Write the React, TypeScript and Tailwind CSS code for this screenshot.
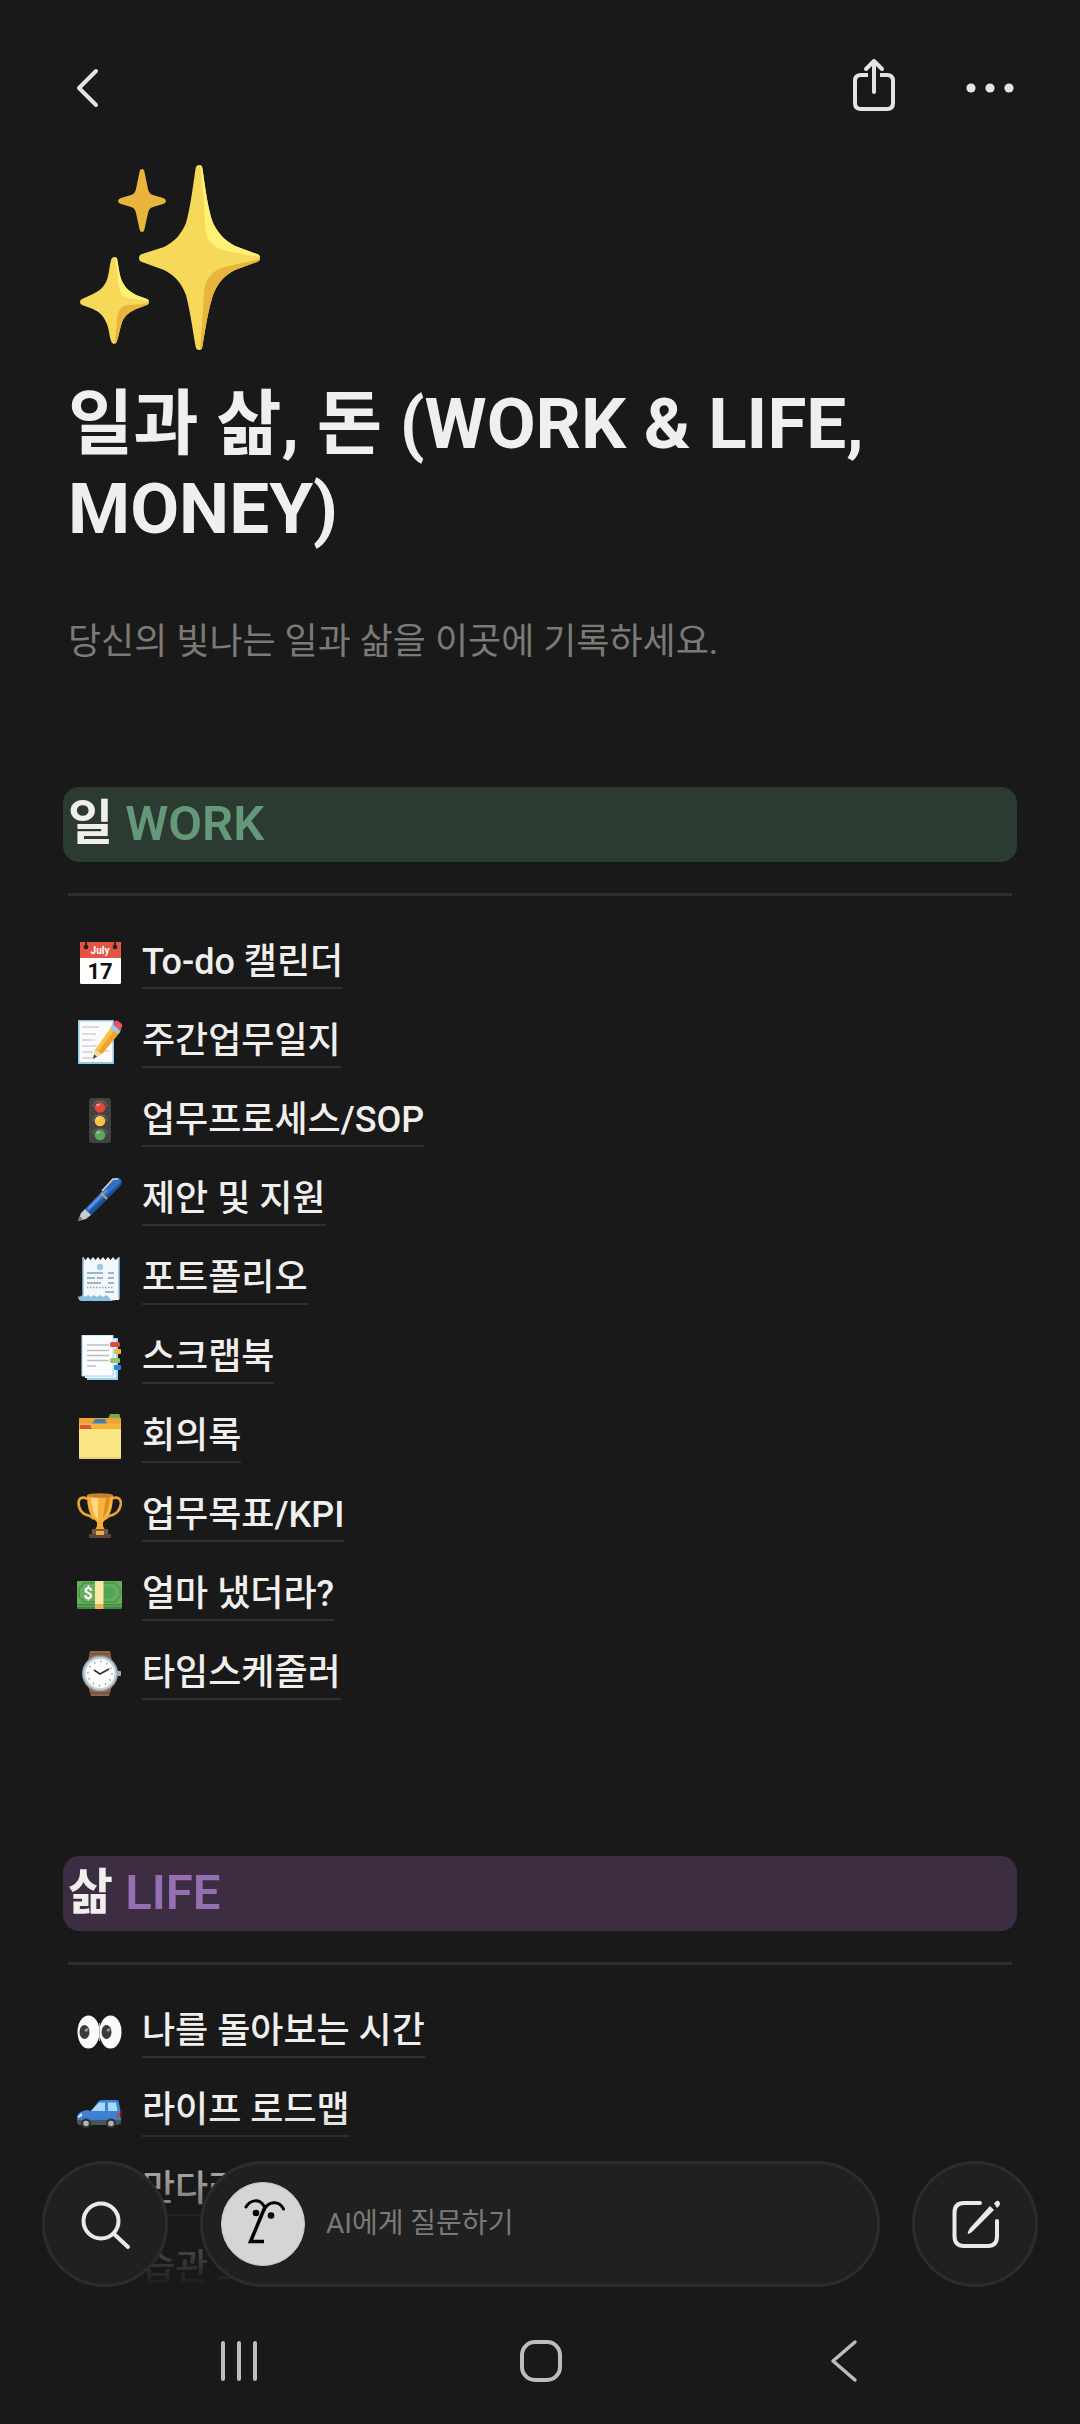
import type { ReactNode } from "react";

const font = "font-['Roboto','Noto_Sans_CJK_KR',sans-serif]";

function Sparkles() {
  return (
    <svg viewBox="0 0 200 200" className="size-50" aria-hidden="true">
      <path
        d="M131 0Q134 0 134.500 4C138 28 140 44 145 58C151 70 158 76 167 81L189 89Q192 90 192 93Q192 96 189 97L167 105C157 110 150 117 145 130C140 146 138 160 134.500 181Q134 185 131 185Q128 185 127.500 181C124 160 122 146 118 130C113 117 106 110 96 105L74 97Q71 96 71 93Q71 90 74 89L96 82C106 77 113 70 118 58C122 44 124 28 127.500 4Q128 0 131 0Z"
        fill="#f6d958"
      />
      <path
        d="M132 0Q134 0 134.500 4C138 28 140 44 145 58C151 70 158 76 167 81L189 89Q192 90 192 92C180 90 165 88 152 84C143 80 139 74 137.500 64C136 44 135 20 132 0Z"
        fill="#fff173"
      />
      <path
        d="M192 94Q192 96 189 97L167 105C157 110 150 117 145 130C140 146 138 160 134.500 181Q134 185 132 185C134 165 135 145 136 126C138 113 144 106 156 102C168 99 180 97 192 94Z"
        fill="#e9b53c"
      />
      <path
        d="M74 4Q76 4 76.500 7L80 24Q81 29 85 30L95 33Q98 34 98 36Q98 38 95 39L85 42Q81 43 80 48L76.500 64Q76 67 74 67Q72 67 71.500 64L68 48Q67 43 63 42L53 39Q50 38 50 36Q50 34 53 33L63 30Q67 29 68 24L71.500 7Q72 4 74 4Z"
        fill="#e9b53c"
      />
      <path
        d="M46 92Q48 92 49 95C51 105 52 113 55 118C58 124 63 127 68 130L79 134Q81 135 81 137Q81 139 79 140L68 144C62 147 57 150 54 157C52 163 51 170 49 176Q48 179 46 179Q44 179 43 176C41 169 41 163 38 157C35 150 31 147 25 144L14 140Q12 139 12 137Q12 135 14 134L25 129C31 126 35 123 38 117C41 111 41 103 43 95Q44 92 46 92Z"
        fill="#f6d958"
      />
      <path
        d="M47 92Q49 92 49.500 95C51 105 52 113 55 118C58 124 63 127 68 130L79 134Q81 135 81 136C71 135 60 134 55 131C51 127 50 117 49.500 108Z"
        fill="#fff173"
      />
      <path
        d="M81 138Q81 139 79 140L68 144C62 147 57 150 54 157C52 163 51 170 49 176Q48 179 47 179L49 155C50 145 53 141 60 140C67 140 75 139 81 138Z"
        fill="#e9b53c"
      />
    </svg>
  );
}

// Emoji drawings share a 45 x 45 box.
function Emoji({ children }: { children: ReactNode }) {
  return (
    <svg viewBox="0 0 45 45" className="size-[45px] shrink-0" aria-hidden="true">
      {children}
    </svg>
  );
}

const icons: Record<string, ReactNode> = {
  calendar: (
    <>
      <rect x="3" y="2" width="41" height="42" rx="1.500" fill="#fff" />
      <path d="M3 18V4Q3 2 5 2H42Q44 2 44 4V18Z" fill="#e25444" />
      <circle cx="9" cy="7" r="2.300" fill="#2d1a1a" />
      <circle cx="38" cy="7" r="2.300" fill="#2d1a1a" />
      <path d="M9 1V6M38 1V6" stroke="#1a1a1a" strokeWidth="1.600" />
      <text x="23" y="14" textAnchor="middle" fontSize="10" fontWeight="700" fill="#fff">
        July
      </text>
      <text x="23" y="39" textAnchor="middle" fontSize="22" fontWeight="700" fill="#111">
        17
      </text>
    </>
  ),
  memo: (
    <>
      <rect x="1" y="1" width="36" height="44" fill="#8fc7ea" />
      <rect x="2.500" y="2.500" width="33" height="40.500" fill="#fbfbfb" />
      <path d="M5 8H22M5 15H19M5 21H18M5 27H20M26 32H32M5 33H16M5 39H16" stroke="#b9bcc0" strokeWidth="1.200" />
      <path d="M16 40L18 31L35 7L43 13L25 35Z" fill="#f9c23c" />
      <path d="M21 33L38 10L43 13L25 35Z" fill="#eda32f" />
      <path d="M16 40L18 31L25 35Z" fill="#f5d5ae" />
      <path d="M16 40L17 35.500L20 37.500Z" fill="#444" />
      <path d="M33 9L36 5L44 11L41 15Z" fill="#9ecbe3" />
      <path d="M36 5L38 2Q39 1 41 2L45 5Q46 6 45 8L43 12Z" fill="#e6565f" />
    </>
  ),
  light: (
    <>
      <rect x="12" y="0" width="22" height="45" rx="3" fill="#424242" />
      <path d="M16 9Q16 3 23 3Q30 3 30 9M16 23Q16 17 23 17Q30 17 30 23M16 36Q16 31 23 31Q30 31 30 36" fill="none" stroke="#77726d" strokeWidth="1" />
      <circle cx="23" cy="9.500" r="5.300" fill="#e1483b" />
      <circle cx="23" cy="23" r="5.300" fill="#fcc43d" />
      <circle cx="23" cy="37" r="5.300" fill="#58a95a" />
      <ellipse cx="21" cy="7" rx="2" ry="1.200" fill="#fff" opacity=".4" />
      <ellipse cx="21" cy="20.500" rx="2" ry="1.200" fill="#fff" opacity=".4" />
      <ellipse cx="21" cy="34.500" rx="2" ry="1.200" fill="#fff" opacity=".4" />
    </>
  ),
  pen: (
    <>
      <path d="M8 32L36 3Q39 0 42 1Q46 3 44 8L14 38Z" fill="#2f6fc4" />
      <path d="M11.500 35L44 5L44 8L14 38Z" fill="#1d4f9c" />
      <path d="M11 32L30 13" stroke="#5b9be6" strokeWidth="2" />
      <path d="M1 44L4 36L8 32L14 38L9 42Z" fill="#c5ccd1" />
      <path d="M1 44L3 39.500L5.500 42Z" fill="#69747a" />
      <path d="M24 16L30 22" stroke="#c9a35a" strokeWidth="1.800" />
      <path d="M25 14L36 2L41 2" fill="none" stroke="#d4d8db" strokeWidth="1.700" strokeLinejoin="round" />
    </>
  ),
  receipt: (
    <>
      <path d="M6 1L8.500 4L11 1L13.500 4L16 1L18.500 4L21 1L23.500 4L26 1L28.500 4L31 1L33.500 4L36 1L38.500 4L42 1V44H6Z" fill="#f5f8fa" />
      <path d="M42 1V43M6 1V38" stroke="#8bc0e2" strokeWidth="1.500" />
      <path d="M1 40Q3 42 6 38L8 41L11 39L14 41L17 39L20 41L23 39L26 41L29 39L32 41Q32 44 39 45H5Q1 45 1 40Z" fill="#8bc0e2" />
      <circle cx="23" cy="11" r="3.200" fill="#9ccbe2" />
      <path d="M10 17H26M31 17H37M10 22H18M20 22H26M31 22H37M10 27H24M31 27H37M28 36H37" stroke="#9ab7c9" strokeWidth="1.800" />
      <path d="M10 31.500H37" stroke="#8aa8ba" strokeWidth="1.500" strokeDasharray="1.500 1.500" />
    </>
  ),
  tabs: (
    <>
      <path d="M10 3H41V45H10Z" fill="#9bd2f3" />
      <path d="M8 4H39V43H8Z" fill="#e7f4fb" />
      <path d="M5 0H36V41H5Z" fill="#fbfcfd" stroke="#abd8f2" strokeWidth="1" />
      <path d="M10 10H32M10 15.500H32M10 20.500H32M10 25.500H32M10 31H19" stroke="#bdbec2" strokeWidth="1.500" />
      <rect x="33" y="7" width="10" height="5" rx="1.500" fill="#db4b43" />
      <rect x="37" y="14" width="7" height="5" rx="1" fill="#f0b63f" />
      <rect x="33" y="23" width="10" height="5" rx="1.500" fill="#9cc56b" />
      <rect x="37" y="30" width="7" height="5" rx="1" fill="#3584d4" />
    </>
  ),
  dividers: (
    <>
      <path d="M31 5L33 0H42Q43 0 43 2V6H31Z" fill="#7aab43" />
      <rect x="2" y="4" width="42" height="12" fill="#f1a236" />
      <path d="M15 10L18 5H28L30 10Z" fill="#3f80b5" />
      <rect x="2" y="9.500" width="42" height="5" fill="#f6b63a" />
      <path d="M3 15V11H13L15 15Z" fill="#dc5638" />
      <rect x="2" y="15" width="42" height="30" rx="1" fill="#fae682" />
      <path d="M2 44H44" stroke="#dfbf59" />
    </>
  ),
  trophy: (
    <>
      <path d="M11 6Q2 2 1.500 10Q2 21 13 23L17 26M34 6Q43 2 44 10Q43 21 32 23L28 26" fill="none" stroke="#e8a336" strokeWidth="2.600" />
      <path d="M10 2H36Q36 20 29 26Q26 29 25 31H21Q20 29 17 26Q10 20 10 2Z" fill="#f6b23b" />
      <path d="M14 4H21V27Q15 20 14 4Z" fill="#fdd988" />
      <path d="M29 4H33Q32 18 26 25Z" fill="#dd8d2b" />
      <ellipse cx="23" cy="2.500" rx="13" ry="2.300" fill="#c97d2c" />
      <path d="M20 29H26V33L28 37H18L20 33Z" fill="#f1ac35" />
      <rect x="15" y="36" width="16" height="6" fill="#7b5548" />
      <rect x="12" y="41" width="22" height="4" rx="1" fill="#5f4238" />
      <rect x="19" y="38" width="8" height="4" fill="#e6b041" />
    </>
  ),
  money: (
    <>
      <rect x="0" y="9" width="45" height="28" rx="1" fill="#3f8a43" />
      <path d="M0 34H45" stroke="#6fae68" strokeWidth="1" />
      <rect x="0" y="9" width="45" height="23" rx="1" fill="#67ad5e" />
      <path d="M6 11H39Q39 15 43 16V25Q39 26 39 30H6Q6 26 2 25V16Q6 15 6 11Z" fill="none" stroke="#3d8742" strokeWidth="1" />
      <circle cx="32" cy="20.500" r="6.500" fill="#4ea657" />
      <text x="11" y="27" textAnchor="middle" fontSize="16" fontWeight="700" fill="#fff">
        $
      </text>
      <rect x="18" y="9" width="8.500" height="23" fill="#fbeaa3" />
      <rect x="18" y="32" width="8.500" height="5" fill="#e8b454" />
    </>
  ),
  watch: (
    <>
      <path d="M13 0H33L35 10H11ZM11 35H35L32 45H14Z" fill="#8d6248" />
      <path d="M14 3H32M14 42H32" stroke="#6c4733" strokeWidth="1" />
      <rect x="39" y="20" width="5" height="5" rx="1" fill="#a3b0b8" />
      <circle cx="23" cy="22.500" r="18" fill="#8fa2ae" />
      <circle cx="23" cy="22.500" r="16.500" fill="#c5d0d7" />
      <circle cx="23" cy="22.500" r="14.500" fill="#fdfdfd" />
      <circle cx="23" cy="22.500" r="12" fill="none" stroke="#8b8b8b" strokeWidth="2" strokeDasharray="1 5.283" />
      <path d="M17 19L23 23L32 18" fill="none" stroke="#333" strokeWidth="1.600" />
    </>
  ),
  eyes: (
    <>
      <ellipse cx="11.500" cy="23" rx="11" ry="16.500" fill="#fafafa" />
      <ellipse cx="33.500" cy="23" rx="11" ry="16.500" fill="#fafafa" />
      <path d="M22.500 14V32" stroke="#b4bcc2" strokeWidth="1" />
      <ellipse cx="7.500" cy="23" rx="5" ry="7" fill="#3b3b3b" />
      <ellipse cx="29.500" cy="23" rx="5" ry="7" fill="#3b3b3b" />
      <ellipse cx="9.500" cy="21" rx="2" ry="1.500" fill="#999" transform="rotate(-30 9.500 21)" />
      <ellipse cx="31.500" cy="21" rx="2" ry="1.500" fill="#999" transform="rotate(-30 31.500 21)" />
    </>
  ),
  car: (
    <>
      <path d="M0 28Q2 23 10 22L14 23L21 14Q22 12 25 12H39Q42 12 42 15L44 25V33Q44 35 41 35H3Q0 35 0 33Z" fill="#3f83d8" />
      <path d="M14 23L22 14.500H28V23ZM31 14.500H39L40.500 23H31Z" fill="#a5dcf5" />
      <path d="M0 32H44V35Q43 37 40 37H2Q0 36 0 34Z" fill="#4d5961" />
      <rect x="43" y="21" width="2" height="9" rx="1" fill="#333" />
      <rect x="40" y="25" width="3" height="4" fill="#d54141" />
      <path d="M1 28L5 25V28L1 30Z" fill="#e8f6ff" />
      <circle cx="9" cy="35.500" r="5" fill="#343434" />
      <circle cx="9" cy="35.500" r="2.800" fill="#bcc1c4" />
      <circle cx="34" cy="35.500" r="5" fill="#343434" />
      <circle cx="34" cy="35.500" r="2.800" fill="#bcc1c4" />
    </>
  ),
  target: (
    <>
      <circle cx="22" cy="23" r="20" fill="#d94b43" />
      <circle cx="22" cy="23" r="13" fill="#f5f5f5" />
      <circle cx="22" cy="23" r="6" fill="#d94b43" />
    </>
  ),
  note: <rect x="2" y="3" width="42" height="41" rx="2" fill="#c9c043" />,
};

interface Page {
  icon: string;
  title: string;
}

const workPages: Page[] = [
  { icon: "calendar", title: "To-do 캘린더" },
  { icon: "memo", title: "주간업무일지" },
  { icon: "light", title: "업무프로세스/SOP" },
  { icon: "pen", title: "제안 및 지원" },
  { icon: "receipt", title: "포트폴리오" },
  { icon: "tabs", title: "스크랩북" },
  { icon: "dividers", title: "회의록" },
  { icon: "trophy", title: "업무목표/KPI" },
  { icon: "money", title: "얼마 냈더라?" },
  { icon: "watch", title: "타임스케줄러" },
];

const lifePages: Page[] = [
  { icon: "eyes", title: "나를 돌아보는 시간" },
  { icon: "car", title: "라이프 로드맵" },
  { icon: "target", title: "만다라트" },
  { icon: "note", title: "습관 트래커" },
];

function Section({
  korean,
  english,
  box,
  accent,
  pages,
}: {
  korean: string;
  english: string;
  box: string;
  accent: string;
  pages: Page[];
}) {
  return (
    <section>
      <h2 className={`-mx-[5px] h-[75px] rounded-2xl px-[5px] text-[49px] leading-[74px] font-bold ${box}`}>
        {korean} <span className={`font-semibold ${accent}`}>{english}</span>
      </h2>
      <hr className="mt-[31px] border-t-[3px] border-[#2e2e2e]" />
      <ul className="mt-[27px]">
        {pages.map((page) => (
          <li key={page.title} className="flex h-[79px] items-center pl-[9px]">
            <Emoji>{icons[page.icon]}</Emoji>
            <a
              href="#"
              className="ml-5 border-b-2 border-[#303030] text-[36px] leading-[50px] font-medium"
            >
              {page.title}
            </a>
          </li>
        ))}
      </ul>
    </section>
  );
}

function TopBar() {
  return (
    <header className="flex h-[152px] shrink-0 items-center pt-6 pr-[60px] pl-[64px] text-[#e6e4e2]">
      <button type="button" aria-label="뒤로" className="mr-auto">
        <svg viewBox="0 0 48 60" className="h-15 w-12" fill="none" stroke="currentColor" strokeWidth="4" strokeLinecap="round" strokeLinejoin="round">
          <path d="M32 13L15 30L32 47" />
        </svg>
      </button>
      <button type="button" aria-label="공유" className="mr-14">
        <svg viewBox="0 0 60 60" className="size-15" fill="none" stroke="currentColor" strokeWidth="4">
          <path d="M24 17H17Q11 17 11 23V45Q11 51 17 51H43Q49 51 49 45V23Q49 17 43 17H36" />
          <path d="M30 34V3M22 11L30 3L38 11" strokeLinecap="round" strokeLinejoin="round" />
        </svg>
      </button>
      <button type="button" aria-label="더 보기">
        <svg viewBox="0 0 60 60" className="size-15" fill="currentColor">
          <circle cx="11" cy="30" r="4.600" />
          <circle cx="30" cy="30" r="4.600" />
          <circle cx="49" cy="30" r="4.600" />
        </svg>
      </button>
    </header>
  );
}

function BottomBar() {
  const round =
    "flex size-[126px] shrink-0 items-center justify-center rounded-full border-[3px] border-[#2c2c2b] bg-[#202020]";
  return (
    <footer className="absolute inset-x-0 bottom-0">
      <div className="bg-linear-to-b from-[#191919]/0 to-[#191919] pt-[51px]">
        <div className="flex items-center gap-8 px-[42px] text-[#eceae8]">
          <button type="button" aria-label="검색" className={round}>
            <svg viewBox="0 0 60 60" className="size-15" fill="none" stroke="currentColor" strokeWidth="4" strokeLinecap="round">
              <circle cx="26" cy="27" r="17.500" />
              <path d="M39 40L53 53" />
            </svg>
          </button>
          <div className="flex h-[126px] min-w-0 flex-1 items-center rounded-full border-[3px] border-[#2c2c2b] bg-[#202020] pr-8 pl-[18px]">
            <svg viewBox="0 0 84 84" className="size-21 shrink-0" fill="none" stroke="#000" strokeLinecap="round" aria-hidden="true">
              <circle cx="42" cy="42" r="41.500" fill="#d5d5d5" stroke="#c9c9c9" strokeWidth="1" />
              <path d="M25 25C29 18 38 16 43 24M43 28C47 19 58 18 62.500 27" strokeWidth="3" />
              <path d="M44 25L29.500 59.500H43" strokeWidth="3.500" strokeLinecap="butt" strokeLinejoin="miter" />
              <circle cx="35" cy="31" r="3.300" fill="#000" stroke="none" />
              <circle cx="50" cy="33.500" r="3.300" fill="#000" stroke="none" />
            </svg>
            <input
              type="text"
              aria-label="AI에게 질문하기"
              placeholder="AI에게 질문하기"
              className="ml-[21px] min-w-0 flex-1 bg-transparent text-[28px] outline-none placeholder:text-[#7b7a77]"
            />
          </div>
          <button type="button" aria-label="새 페이지" className={round}>
            <svg viewBox="0 0 60 60" className="size-15" fill="none" stroke="currentColor" strokeWidth="4" strokeLinecap="round">
              <path d="M35 9H19Q9.500 9 9.500 18.500V42Q9.500 52 19 52H43Q52 52 52 42V27" />
              <path d="M45 12L49 16L28 37Q25 40 23 40Q22 39 25 34Z" fill="currentColor" stroke="none" />
              <path d="M49 9.500L51.500 7Q53 6 54.500 8Q56 10 54 12L52 14Z" fill="currentColor" stroke="none" />
            </svg>
          </button>
        </div>
      </div>
      <nav className="flex h-[137px] items-center justify-between bg-[#191919] px-52 pt-[11px] text-[#bdbdbd]">
        <button type="button" aria-label="최근 앱">
          <svg viewBox="0 0 64 64" className="size-16" stroke="currentColor" strokeWidth="4" strokeLinecap="round">
            <path d="M15 14V50M31 14V50M47 14V50" />
          </svg>
        </button>
        <button type="button" aria-label="홈">
          <svg viewBox="0 0 64 64" className="size-16" fill="none" stroke="currentColor" strokeWidth="4">
            <rect x="14" y="13" width="38" height="38" rx="13" />
          </svg>
        </button>
        <button type="button" aria-label="이전">
          <svg viewBox="0 0 64 64" className="size-16" fill="none" stroke="currentColor" strokeWidth="3.500" strokeLinecap="round" strokeLinejoin="round">
            <path d="M47 13L25 32L47 51" />
          </svg>
        </button>
      </nav>
    </footer>
  );
}

export default function App() {
  return (
    <div className={`relative flex h-dvh flex-col overflow-hidden bg-[#191919] text-[#f0efed] ${font}`}>
      <TopBar />
      <main className="flex-1 overflow-y-auto px-[68px] pt-[13px] [scrollbar-width:none]">
        <Sparkles />
        <h1 className="mt-4 text-[71px] leading-[85px] font-bold">
          일과 삶, 돈 (WORK &amp; LIFE, MONEY)
        </h1>
        <p className="mt-[66px] text-[36px] leading-[50px] text-[#7b7a77]">
          당신의 빛나는 일과 삶을 이곳에 기록하세요.
        </p>
        <div className="mt-[120px] flex flex-col gap-[143px]">
          <Section korean="일" english="WORK" box="bg-[#2b3b31]" accent="text-[#659879]" pages={workPages} />
          <Section korean="삶" english="LIFE" box="bg-[#3c2d43]" accent="text-[#966fb1]" pages={lifePages} />
        </div>
      </main>
      <BottomBar />
    </div>
  );
}
